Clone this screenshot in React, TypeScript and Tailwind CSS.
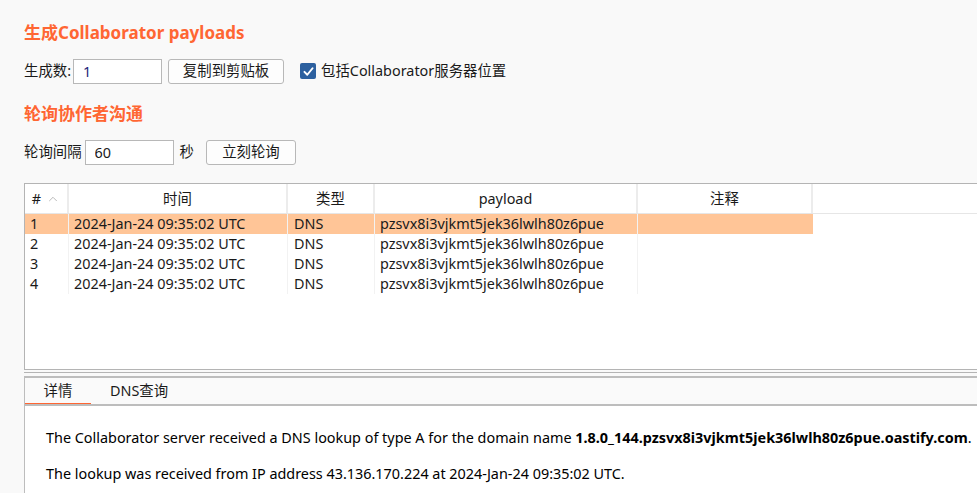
import { ChevronUp } from 'lucide-react';

const rows = [1, 2, 3, 4].map((n) => ({
  id: n,
  time: '2024-Jan-24 09:35:02 UTC',
  type: 'DNS',
  payload: 'pzsvx8i3vjkmt5jek36lwlh80z6pue',
}));

const cols = [
  { key: 'id', label: '#', w: 'w-[44px]' },
  { key: 'time', label: '时间', w: 'w-[219px]' },
  { key: 'type', label: '类型', w: 'w-[87px]' },
  { key: 'payload', label: 'payload', w: 'w-[263px]' },
  { key: 'note', label: '注释', w: 'w-[175px]' },
];

export default function App() {
  return (
    <div
      className="w-full h-[493px] overflow-hidden bg-[#f9f9f9] text-[14.4px] text-[#1a1a1a]"
      style={{ fontFamily: '"Noto Sans", "Noto Sans CJK SC", sans-serif' }}
    >
      {/* 生成 */}
      <div className="px-6 pt-[21px]">
        <h2 className="text-[17px] font-bold text-[#ff6633] leading-[24px]">生成Collaborator payloads</h2>
        <div className="flex items-center mt-[13px] h-[26px]">
          <span>生成数:</span>
          <input
            defaultValue="1"
            className="ml-[2px] w-[89px] h-[25px] border border-[#b8b8b8] bg-white px-[9px] text-[#24247a] outline-none"
          />
          <button className="ml-[6px] w-[116px] h-[25px] border border-[#b8b8b8] rounded-[3px] bg-[#fdfdfd]">复制到剪贴板</button>
          <span className="ml-[16px] w-[16px] h-[16px] rounded-[2px] bg-[#2c609f] flex items-center justify-center">
            <svg viewBox="0 0 16 16" className="w-[13px] h-[13px]" fill="none" stroke="white" strokeWidth="2.4" strokeLinecap="round" strokeLinejoin="round">
              <path d="M3 8.5 L6.5 12 L13 4" />
            </svg>
          </span>
          <span className="ml-[5px]">包括Collaborator服务器位置</span>
        </div>

        <h2 className="mt-[18px] text-[17px] font-bold text-[#ff6633] leading-[24px]">轮询协作者沟通</h2>
        <div className="flex items-center mt-[13px] h-[26px]">
          <span>轮询间隔</span>
          <input
            defaultValue="60"
            className="ml-[3px] w-[89px] h-[25px] border border-[#b8b8b8] bg-white px-[9px] outline-none"
          />
          <span className="ml-[6px]">秒</span>
          <button className="ml-[12px] w-[90px] h-[25px] border border-[#b8b8b8] rounded-[3px] bg-[#fdfdfd]">立刻轮询</button>
        </div>
      </div>

      {/* 表格 */}
      <div className="ml-6 mt-[18px] h-[187px] border-l border-t border-b border-[#b4b4b4] bg-white">
        <div className="flex h-[30px] border-b border-[#e6e6e6]">
          {cols.map((c) => (
            <div key={c.key} className={`${c.w} shrink-0 flex items-center justify-center border-r-2 border-[#ececec]`}>
              {c.label}
              {c.key === 'id' && <ChevronUp className="ml-[5px] w-[14px] h-[14px] text-[#b0b0b0]" strokeWidth={1.5} />}
            </div>
          ))}
          <div className="flex-1" />
        </div>
        {rows.map((r) => (
          <div key={r.id} className={`flex h-[20px] leading-[20px] w-[788px] ${r.id === 1 ? 'bg-[#ffc597]' : ''}`}>
            <div className="w-[44px] pl-[5px] border-r border-[#f2f2f2]">{r.id}</div>
            <div className="w-[219px] pl-[5px] border-r border-[#f2f2f2]">{r.time}</div>
            <div className="w-[87px] pl-[6px] border-r border-[#f2f2f2]">{r.type}</div>
            <div className="w-[263px] pl-[5px] border-r border-[#f2f2f2]">{r.payload}</div>
            <div className="w-[175px]" />
          </div>
        ))}
      </div>

      {/* 分隔 */}
      <div className="ml-6 mt-[2px] border-t border-[#b4b4b4]" />

      {/* 详情 */}
      <div className="ml-6 mt-[3px] border-t-2 border-b-2 border-l border-[#bdbdbd] bg-[#fafafa] h-[30px] flex">
        <div className="w-[66px] flex flex-col items-center">
          <span className="leading-[24px] mt-[1px]">详情</span>
          <span className="mt-auto w-full h-[3px] bg-[#ff6633]" />
        </div>
        <span className="ml-[19px] leading-[24px] mt-[1px]">DNS查询</span>
      </div>
      <div className="ml-6 h-[100px] border-l border-[#bdbdbd] bg-white pl-[21px] pt-[21px] text-black">
        <p className="leading-[22px]">
          The Collaborator server received a DNS lookup of type A for the domain name{' '}
          <b>1.8.0_144.pzsvx8i3vjkmt5jek36lwlh80z6pue.oastify.com</b>.
        </p>
        <p className="leading-[22px] mt-[14px]">The lookup was received from IP address 43.136.170.224 at 2024-Jan-24 09:35:02 UTC.</p>
      </div>
    </div>
  );
}
